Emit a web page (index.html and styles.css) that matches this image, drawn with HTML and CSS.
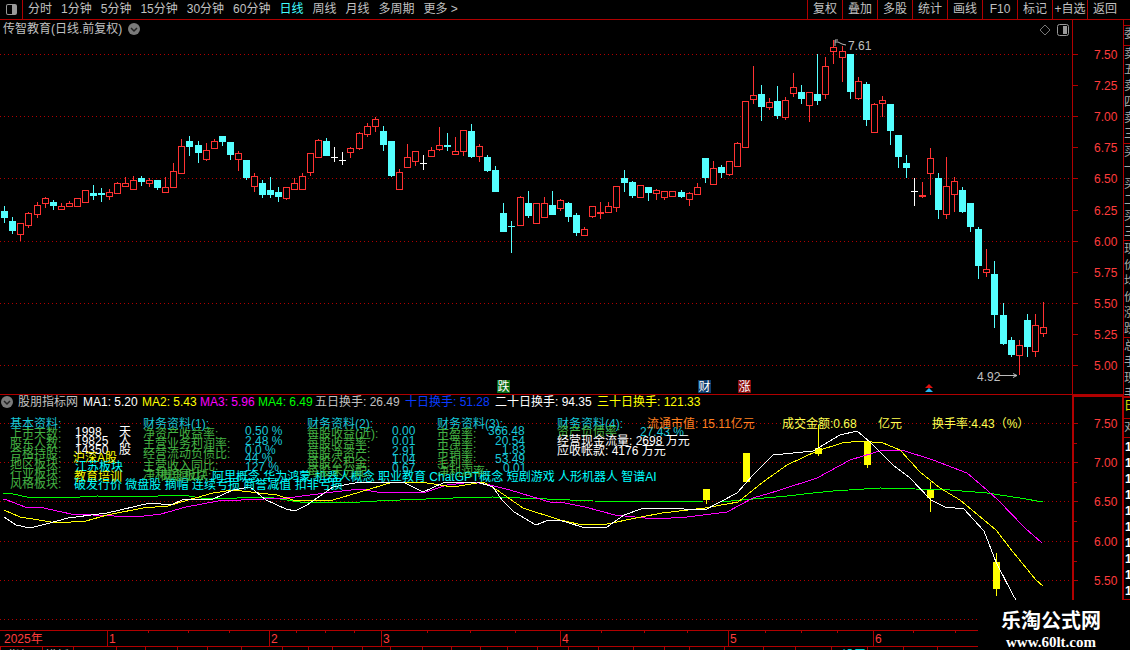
FILE: index.html
```html
<!DOCTYPE html>
<html lang="zh">
<head>
    <meta charset="UTF-8">
    <title>传智教育 日线</title>
    <link rel="stylesheet" href="styles.css">
</head>
<body>
    <div class="app">
        <!-- 顶部工具栏 -->
        <header class="toolbar">
            <div class="panel-btn"><span class="panel-icon"></span></div>
            <nav class="periods">
                <a href="#">分时</a>
                <a href="#">1分钟</a>
                <a href="#">5分钟</a>
                <a href="#">15分钟</a>
                <a href="#">30分钟</a>
                <a href="#">60分钟</a>
                <a href="#" class="active">日线</a>
                <a href="#">周线</a>
                <a href="#">月线</a>
                <a href="#">多周期</a>
                <a href="#">更多 &gt;</a>
            </nav>
            <div class="tools">
                <a href="#">复权</a>
                <a href="#">叠加</a>
                <a href="#">多股</a>
                <a href="#">统计</a>
                <a href="#">画线</a>
                <a href="#">F10</a>
                <a href="#">标记</a>
                <a href="#">+自选</a>
                <a href="#">返回</a>
            </div>
        </header>

        <div class="workspace">
            <main class="charts">
                <!-- K线 -->
                <svg id="kline" class="kline" viewBox="0 20 1123 375">
                    <text class="gray" x="3" y="33">传智教育(日线.前复权)</text>
                    <circle cx="134" cy="29" r="6" fill="#7a7a7a"/>
                    <path d="M131 28l3 3 3-3" fill="none" stroke="#222" stroke-width="1.5"/>
                    <path d="M1045 25l5 5-5 5-5-5z" fill="none" stroke="#777"/>
                    <rect x="1057.5" y="24.5" width="11" height="11" rx="2" fill="none" stroke="#999"/>
                    <rect x="1063" y="26" width="4" height="8" fill="#999"/>

                    <path d="M835 46v-6h3m-3 2h3l4 2 4 1" fill="none" stroke="#bbb"/>
                    <text class="gray" x="848" y="50">7.61</text>
                    <text class="gray" x="977" y="381">4.92</text>
                    <path d="M999 375.5h18m-4-2l4 2-4 2" fill="none" stroke="#bbb"/>

                    <rect x="497" y="380" width="13" height="13" fill="#0a6a14"/>
                    <text class="badge" x="503.5" y="391">跌</text>
                    <rect x="698" y="380" width="13" height="13" fill="#0c3c6c"/>
                    <text class="badge" x="704.5" y="391">财</text>
                    <rect x="738" y="380" width="13" height="13" fill="#8a0c0c"/>
                    <text class="badge" x="744.5" y="391">涨</text>
                    <path d="M925 388l4-4 4 4z" fill="#e01010"/>
                    <path d="M925 392l4-4 4 4z" fill="#28b4f0"/>
                </svg>

                <!-- 副图指标 -->
                <svg id="indicator" class="indicator" viewBox="0 395 1123 235">
                    <circle cx="7" cy="402" r="6" fill="#7a7a7a"/>
                    <path d="M4 401l3 3 3-3" fill="none" stroke="#222" stroke-width="1.5"/>
                    <text class="gray" x="18" y="406">股朋指标网</text>
                    <text class="white" x="83" y="406">MA1: 5.20</text>
                    <text class="yellow" x="142" y="406">MA2: 5.43</text>
                    <text class="magenta" x="200" y="406">MA3: 5.96</text>
                    <text class="lime" x="258" y="406">MA4: 6.49</text>
                    <text class="gray" x="315" y="406">五日换手: 26.49</text>
                    <text class="blue" x="405" y="406">十日换手: 51.28</text>
                    <text class="white" x="495" y="406">二十日换手: 94.35</text>
                    <text class="yellow" x="597" y="406">三十日换手: 121.33</text>

                    <g class="info">
                        <text class="teal" x="10" y="428">基本资料:</text>
                        <text class="green" x="10" y="438">上市天数:</text>
                        <text class="green" x="10" y="448">股东人数:</text>
                        <text class="green" x="10" y="458">合格持股:</text>
                        <text class="green" x="10" y="468">地区板块:</text>
                        <text class="green" x="10" y="478">行业板块:</text>
                        <text class="green" x="10" y="488">风格板块:</text>
                        <text class="white" x="75" y="436">1998</text>
                        <text class="white" x="119" y="436">天</text>
                        <text class="white" x="75" y="445">19825</text>
                        <text class="white" x="119" y="445">人</text>
                        <text class="white" x="75" y="454">14350</text>
                        <text class="white" x="119" y="454">股</text>
                        <text class="yellow" x="73" y="462">沪深A股</text>
                        <text class="cyan" x="75" y="471">江苏板块</text>
                        <text class="yellow" x="74" y="481">教育培训</text>
                        <text class="cyan" x="74" y="489">破发行价 微盘股 摘帽 连续亏损 商誉减值 扣非亏损</text>

                        <text class="teal" x="143" y="428">财务资料(1):</text>
                        <text class="green" x="143" y="438">净资产收益率:</text>
                        <text class="green" x="143" y="448">主营业务利润率:</text>
                        <text class="green" x="143" y="458">经营流动负债比:</text>
                        <text class="green" x="143" y="470">主营收入同比:</text>
                        <text class="green" x="143" y="479">净利润同比:</text>
                        <text class="green" x="160" y="480">概念板块:</text>
                        <text class="teal" x="245" y="435">0.50 %</text>
                        <text class="teal" x="245" y="445">2.48 %</text>
                        <text class="teal" x="245" y="454">0.0 %</text>
                        <text class="teal" x="245" y="462">44 %</text>
                        <text class="teal" x="245" y="471">127 %</text>
                        <text class="cyan" x="212" y="481">阿里概念 华为鸿蒙 机器人概念 职业教育 ChatGPT概念 短剧游戏 人形机器人 智谱AI</text>

                        <text class="teal" x="307" y="428">财务资料(2):</text>
                        <text class="green" x="307" y="438">每股收益(近):</text>
                        <text class="green" x="307" y="448">每股收益率:</text>
                        <text class="green" x="307" y="458">每股净资产:</text>
                        <text class="green" x="307" y="467">每股公积金:</text>
                        <text class="green" x="307" y="476">每股未分配:</text>
                        <text class="teal" x="392" y="435">0.00</text>
                        <text class="teal" x="392" y="445">0.01</text>
                        <text class="teal" x="392" y="455">2.91</text>
                        <text class="teal" x="392" y="463">1.04</text>
                        <text class="teal" x="392" y="472">0.67</text>

                        <text class="teal" x="437" y="428">财务资料(3):</text>
                        <text class="green" x="437" y="438">市盈率:</text>
                        <text class="green" x="437" y="448">市净率:</text>
                        <text class="green" x="437" y="458">市销率:</text>
                        <text class="green" x="437" y="467">毛利率:</text>
                        <text class="green" x="437" y="476">净利润率:</text>
                        <text class="teal" x="488" y="435">366.48</text>
                        <text class="teal" x="495" y="445">20.54</text>
                        <text class="teal" x="502" y="454">1.83</text>
                        <text class="teal" x="495" y="463">53.49</text>
                        <text class="teal" x="503" y="472">0.01</text>

                        <text class="teal" x="557" y="428">财务资料(4):</text>
                        <text class="green" x="557" y="436">资产负债率:</text>
                        <text class="teal" x="640" y="436">27.43 %</text>
                        <text class="white" x="557" y="445">经营现金流量: 2698 万元</text>
                        <text class="white" x="557" y="455">应收帐款: 4176 万元</text>

                        <text class="orange" x="647" y="428">流通市值: 15.11亿元</text>
                        <text class="pale" x="782" y="428">成交金额:0.68</text>
                        <text class="pale" x="878" y="428">亿元</text>
                        <text class="pale" x="932" y="428">换手率:4.43（%）</text>
                    </g>
                </svg>

                <!-- 时间轴 -->
                <svg id="timeline" class="timeline" viewBox="0 630 1123 20"></svg>
            </main>

            <!-- 右侧被截断的报价栏 -->
            <aside class="side">
                <div class="cell cell-a">委</div>
                <div class="cell cell-b">卖五卖四卖三卖二卖一卖</div>
                <div class="cell cell-c">买一买二买三买四买五买</div>
                <div class="cell cell-d">现价均价涨跌涨幅换手</div>
                <div class="cell cell-e">总手现手外盘</div>
                <div class="cell cell-f">日</div>
                <div class="cell cell-g">对</div>
                <div class="ticks">
                    <span>1</span><span>1</span><span>1</span><span>1</span><span>1</span>
                    <span>1</span><span>1</span><span>1</span><span>1</span><span>1</span>
                </div>
            </aside>
        </div>

        <!-- 水印 -->
        <div class="watermark">
            <div class="wm-name">乐淘公式网</div>
            <div class="wm-url">www.60lt.com</div>
        </div>
    </div>

    <script src="script.js"></script>
</body>
</html>
```

FILE: styles.css
```css
body {
    margin: 0;
    background-color: #000;
    font-family: "Liberation Sans", "Noto Sans CJK SC", sans-serif;
    font-size: 12px;
    color: #c0c0c0;
}

.app {
    position: relative;
    width: 1130px;
    height: 650px;
    overflow: hidden;
    display: flex;
    flex-direction: column;
    background-color: #000;
}

/* 工具栏 */
.toolbar {
    display: flex;
    flex-shrink: 0;
    height: 19px;
    border-bottom: 1px solid #b00000;
}

.toolbar a {
    color: #c0c0c0;
    text-decoration: none;
    line-height: 19px;
    white-space: nowrap;
}

.panel-btn {
    width: 22px;
    display: flex;
    align-items: center;
    justify-content: center;
    border-right: 1px solid #b00000;
}

.panel-icon {
    width: 5px;
    height: 9px;
    border: 1px solid #999;
    border-radius: 2px;
    border-right: 5px solid #999;
}

.periods {
    display: flex;
    gap: 9px;
    padding-left: 5px;
}

.periods .active {
    color: #40ffff;
}

.tools {
    display: flex;
    margin-left: auto;
    margin-right: 8px;
}

.tools a {
    width: 34px;
    text-align: center;
    border-left: 1px solid #b00000;
}

/* 主区域 */
.workspace {
    display: flex;
    flex: 1;
    min-height: 0;
}

.charts {
    width: 1123px;
    display: flex;
    flex-direction: column;
}

.charts svg {
    display: block;
    width: 1123px;
    flex-shrink: 0;
}

.kline {
    height: 375px;
}

.indicator {
    height: 235px;
}

.timeline {
    height: 20px;
}

svg text {
    font-size: 12px;
    white-space: pre;
}

.gray { fill: #c0c0c0; }
.white { fill: #fff; }
.yellow { fill: #ff0; }
.magenta { fill: #f0f; }
.lime { fill: #0f0; }
.blue { fill: #0a3cff; }
.cyan { fill: #0ff; }
.teal { fill: #18c8d8; }
.green { fill: #44b444; }
.orange { fill: #ff8020; }
.pale { fill: #ffff50; }
.axis-label { fill: #ff3c3c; }

.badge {
    fill: #fff;
    text-anchor: middle;
}

/* 右侧报价栏 */
.side {
    width: 7px;
    height: 580px;
    overflow: hidden;
    box-sizing: border-box;
    border-left: 1px solid #b00000;
    border-bottom: 1px solid #b00000;
    padding-top: 5px;
}

.cell {
    width: 12px;
    line-height: 16px;
    overflow: hidden;
    border-top: 1px solid #b00000;
    box-sizing: border-box;
    color: #a8a8a8;
}

.cell-a { height: 20px; }
.cell-b { height: 98px; }
.cell-c { height: 97px; }
.cell-d { height: 97px; }
.cell-e { height: 60px; border-bottom: 1px solid #b00000; }
.cell-f { height: 21px; color: #e0e000; }
.cell-g { height: 20px; border-bottom: 1px solid #b00000; }

.ticks {
    display: flex;
    flex-direction: column;
    color: #fff;
    font-weight: 700;
    line-height: 16px;
    padding-top: 1px;
    margin-left: 1px;
}

/* 水印 */
.watermark {
    position: absolute;
    right: 0;
    bottom: 0;
    width: 152px;
    height: 50px;
    background-color: #000;
    text-align: center;
    color: #fff;
    padding-right: 6px;
    box-sizing: border-box;
}

.wm-name {
    font-family: "Noto Sans CJK SC", sans-serif;
    font-size: 20px;
    font-weight: 700;
    line-height: 28px;
    margin-top: 6px;
}

.wm-url {
    font-family: "Liberation Serif", serif;
    font-size: 15px;
    font-weight: 700;
    line-height: 16px;
}
```

FILE: script.js
```js
// 画K线、均线和坐标轴，坐标都是页面像素
const NS = 'http://www.w3.org/2000/svg';
const RED = '#ff3232';
const CYAN = '#54ffff';
const AXIS = '#b00000';

function add(parent, tag, attrs) {
    const el = document.createElementNS(NS, tag);
    for (const k in attrs) el.setAttribute(k, attrs[k]);
    el.setAttribute('shape-rendering', 'crispEdges');
    parent.appendChild(el);
    return el;
}

function hline(svg, x1, x2, y, dashed) {
    const attrs = { x1, x2, y1: y + 0.5, y2: y + 0.5, stroke: AXIS };
    if (dashed) attrs['stroke-dasharray'] = '1 3';
    add(svg, 'line', attrs);
}

function vline(svg, x, y1, y2, color, width) {
    add(svg, 'line', { x1: x + 0.5, x2: x + 0.5, y1, y2, stroke: color || AXIS, 'stroke-width': width || 1 });
}

function label(svg, x, y, text) {
    const t = add(svg, 'text', { x, y, class: 'axis-label' });
    t.textContent = text;
}

// 每行: 颜色, 实体上, 实体下, 最高, 最低 (截图放大3倍的读数, y = base + v / 3)
const rows = [
    [100, [
        'c 333 354 318 369', 'c 363 393 351 402', 'r 370 401 370 423', 'r 340 374 337 384',
        'r 316 341 306 354', 'r 295 308 291 324', 'c 306 318 300 330', 'r 319 326 310 326',
        'r 310 317 304 321', 'r 295 317 295 321', 'r 271 305 271 309', 'c 279 288 255 300',
        'c 279 285 264 306', 'r 277 287 268 300', 'r 250 278 247 278', 'r 250 257 232 260',
        'r 241 266 228 270', 'c 234 246 228 258', 'r 241 248 235 261', 'c 240 264 240 270',
        'r 262 275 232 275', 'r 214 261 189 264', 'r 139 218 117 218', 'c 123 141 108 168',
        'c 135 159 123 189', 'r 151 177 129 183', 'r 124 143 117 143', 'c 108 126 108 138',
        'c 126 165 126 180', 'r 160 176 153 213', 'c 180 234 180 240', 'r 229 257 219 276',
        'c 249 285 240 294', 'c 270 285 231 294', 'c 276 291 261 306', 'r 262 293 262 300',
        'r 250 266 234 266', 'r 229 266 219 270', 'r 160 215 160 228', 'r 121 171 118 174',
        'c 123 168 114 168', 'w 170 170 141 186', 'w 181 181 156 195', 'r 145 155 141 174',
        'r 100 143 96 150', 'r 79 101 69 111', 'r 58 79 51 96'
    ]],
    [90, [
        'c 123 165 108 183', 'c 153 258 153 261', 'r 247 296 237 296', 'r 202 230 162 230',
        'r 184 212 184 228', 'w 220 220 195 240', 'r 181 197 171 197', 'r 166 176 111 183',
        'c 165 171 129 183', 'r 184 191 141 191', 'r 121 182 121 198', 'c 123 201 102 204',
        'r 169 197 162 216', 'c 201 243 195 246', 'c 240 306 228 306', 'c 369 426 339 426',
        'c 408 411 393 489', 'r 322 404 318 408', 'c 339 378 303 384', 'r 340 398 340 398',
        'r 340 380 321 380', 'c 345 375 303 375', 'r 331 353 327 363', 'c 339 381 336 396',
        'c 375 429 369 438', 'r 418 434 411 434', 'r 349 377 349 384', 'f 366 371 336 387',
        'r 349 365 336 365', 'r 289 350 289 366', 'c 264 279 240 306', 'c 276 318 273 324',
        'r 286 320 286 320', 'c 291 309 291 333', 'r 301 308 297 330', 'r 304 320 304 330',
        'r 304 317 304 317', 'c 306 321 300 324', 'r 310 326 306 348', 'r 292 311 279 311',
        'c 204 264 204 279', 'r 235 281 213 281', 'c 231 249 225 264', 'r 214 251 214 258',
        'r 160 227 156 227'
    ]],
    [30, [
        'r 214 350 214 353', 'r 196 208 108 221', 'c 192 231 165 273', 'r 217 230 205 240',
        'c 213 258 168 267', 'r 211 262 202 270', 'r 172 188 129 201', 'c 186 207 165 222',
        'r 187 224 187 276', 'c 192 213 72 225', 'r 109 193 81 207', 'r 52 62 30 102',
        'r 64 80 48 156', 'c 72 186 72 207', 'r 154 204 141 210', 'c 162 270 156 288',
        'r 222 305 219 305', 'r 210 218 198 261', 'c 222 303 222 345', 'c 315 381 315 414',
        'c 399 414 375 444', 'w 484 484 444 528', 'f 495 500 456 504', 'r 385 428 354 495',
        'c 444 540 429 567', 'r 469 551 381 567', 'r 454 491 441 546', 'c 480 546 471 549'
    ]],
    [200, [
        'c 9 81 9 96', 'c 87 198 81 237', 'r 208 215 147 231', 'c 222 345 183 384',
        'c 345 432 309 435', 'c 420 465 411 471', 'r 436 465 420 525', 'c 360 441 342 471',
        'r 376 452 342 471', 'r 382 398 306 411'
    ]]
];

function drawCandles(svg) {
    let i = 0;
    rows.forEach(([base, list]) => {
        list.forEach(line => {
            const [kind, ...vals] = line.split(' ');
            const [top, bot, high, low] = vals.map(v => Math.round(base + v / 3));
            const x = Math.round(4.3 + 8.05 * i);
            const color = { c: CYAN, r: RED, f: RED, w: '#fff' }[kind];
            i++;
            vline(svg, x, high, low, color);
            if (kind === 'r') {
                add(svg, 'rect', { x: x - 2.5, y: top + 0.5, width: 6, height: bot - top, fill: '#000', stroke: color });
            } else {
                add(svg, 'rect', { x: x - 3, y: top, width: 7, height: Math.max(bot - top, 1), fill: color });
            }
        });
    });
}

// 主图坐标轴
const kline = document.getElementById('kline');
[54, 116, 178, 241, 303, 365].forEach(y => hline(kline, 0, 1073, y, true));
[
    [54, '7.50'], [85, '7.25'], [116, '7.00'], [147, '6.75'], [178, '6.50'], [210, '6.25'],
    [241, '6.00'], [272, '5.75'], [303, '5.50'], [334, '5.25'], [365, '5.00']
].forEach(([y, text]) => {
    hline(kline, 1073, 1078, y);
    label(kline, 1094, y + 5, text);
});
vline(kline, 1072, 20, 395);
hline(kline, 0, 1123, 394);
drawCandles(kline);

// 副图坐标轴
const ind = document.getElementById('indicator');
[423, 462, 501, 541, 580, 619].forEach(y => hline(ind, 0, 1073, y, true));
[[423, '7.50'], [462, '7.00'], [501, '6.50'], [541, '6.00'], [580, '5.50']].forEach(([y, text]) => {
    hline(ind, 1073, 1078, y);
    label(ind, 1094, y + 5, text);
});
[443, 482, 521, 561].forEach(y => hline(ind, 1073, 1077, y));
vline(ind, 1072, 395, 600, AXIS, 2);
vline(ind, 1122, 395, 600, AXIS, 2);
add(ind, 'rect', { x: 1072, y: 395, width: 51, height: 2, fill: AXIS });

const lines = [
    ['#0f0', '3,493 13,494 27,497 80,497 97,496 133,497 183,495 207,499 267,497 300,502 360,502 377,501 400,500 453,498 493,497 547,499 593,501 703,502 720,502 753,499 787,496 813,493 833,491 880,488 950,490 987,493 1020,498 1043,502'],
    ['#f0f', '3,499 7,500 25,507 39,507 71,514 136,517 161,514 186,507 218,501 287,498 333,492 360,489 377,492 393,492 423,493 447,485 473,482 490,485 510,490 553,503 560,502 585,507 615,515 655,519 687,517 727,512 753,498 777,491 817,478 850,460 883,450 902,450 933,460 967,473 987,490 998,500 1025,528 1042,543'],
    ['#ff0', '4,510 20,517 39,520 57,523 86,521 107,515 143,508 168,506 188,500 213,493 233,490 277,495 293,500 333,500 360,492 393,482 427,483 453,487 483,482 497,490 523,508 560,520 578,524 607,524 636,518 662,513 705,508 738,502 763,482 787,465 817,451 842,443 860,441 883,443 900,450 920,472 940,488 960,500 996,530 1013,552 1036,580 1043,586'],
    ['#fff', '4,517 16,525 30,528 46,524 68,518 107,513 150,503 171,505 182,500 213,499 233,490 250,487 266,500 286,509 295,511 307,505 333,487 360,482 403,482 423,492 443,483 477,482 493,487 502,500 514,512 536,525 546,521 559,520 582,527 607,527 624,515 644,508 662,508 705,510 720,502 737,493 753,475 773,455 813,451 840,435 857,431 870,442 893,465 910,478 931,500 945,507 964,509 984,531 996,562 1013,595 1016,600']
];

// 成交金额的黄色K线: x, 上, 下, 最高, 最低
[
    [706, 489, 500, 489, 504], [746, 453, 482, 453, 482], [818, 448, 454, 425, 456],
    [867, 442, 465, 442, 468], [930, 489, 498, 482, 512], [996, 562, 589, 553, 596]
].forEach(([x, top, bot, high, low]) => {
    vline(ind, x, high, low, '#ff0');
    add(ind, 'rect', { x: x - 3, y: top, width: 7, height: bot - top, fill: '#ff0' });
});

lines.forEach(([color, points]) => {
    add(ind, 'polyline', { points, fill: 'none', stroke: color });
});

// 文字盖在线上面
ind.appendChild(ind.querySelector('.info'));

// 时间轴
const tl = document.getElementById('timeline');
hline(tl, 0, 978, 630);
hline(tl, 0, 978, 646);
[[107, '1'], [269, '2'], [381, '3'], [560, '4'], [728, '5'], [873, '6']].forEach(([x, text]) => {
    vline(tl, x, 631, 646);
    label(tl, x + 2, 643, text);
});
label(tl, 4, 643, '2025年');
[148, 188, 229, 296, 325, 354, 427, 470, 515, 601, 644, 687, 765, 801, 837, 913, 955].forEach(x => {
    vline(tl, x, 631, 633);
});
[0, 42, 73, 116, 145, 177, 207, 241, 282, 308, 332, 362, 390, 422, 451, 480, 507, 537, 568, 598, 633, 664, 689, 724, 763, 795, 831, 867, 903, 937].forEach(x => {
    vline(tl, x, 647, 650);
});
[[8, '指标', 'gray'], [45, '模板', 'gray'], [842, '设置', 'cyan']].forEach(([x, text, cls]) => {
    const t = add(tl, 'text', { x, y: 660, class: cls });
    t.textContent = text;
});
```
